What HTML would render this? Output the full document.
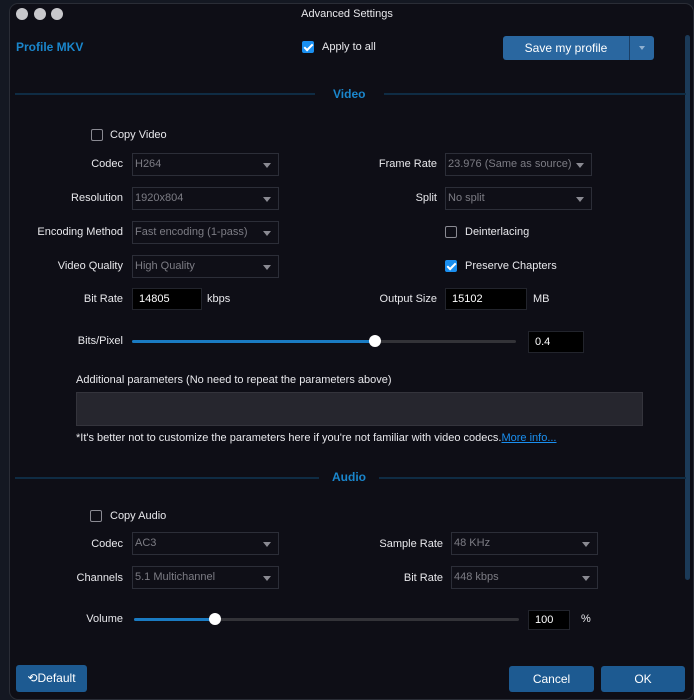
<!DOCTYPE html>
<html><head><meta charset="utf-8"><style>
*{margin:0;padding:0;box-sizing:border-box}
body{width:694px;height:700px;background:#141822;font-family:"Liberation Sans",sans-serif;font-size:11px;color:#e8e8ec;position:relative;overflow:hidden}
.win{position:absolute;left:9px;top:3px;width:685px;height:697px;background:#0e0e16;border:1px solid #2a2d36;border-radius:9px;}
.a{position:absolute;white-space:nowrap}
.lbl{position:absolute;text-align:right;white-space:nowrap}
.sel{position:absolute;height:23px;border:1px solid #2c2e38;background:#0f0f17;color:#7c7c84;padding:0 0 0 2px;line-height:21px}
.sel:after{content:"";position:absolute;right:7px;top:9px;border-left:4px solid transparent;border-right:4px solid transparent;border-top:5px solid #8a8a92}
.inp{position:absolute;background:#000;border:1px solid #22242c;color:#fff;line-height:20px;padding-left:6px}
.cb{position:absolute;width:12px;height:12px;border:1px solid #8a8a92;border-radius:2px}
.cb.on{background:#1a8ff0;border-color:#1a8ff0}
.cb.on:after{content:"";position:absolute;left:3px;top:0px;width:3px;height:7px;border:solid #fff;border-width:0 2px 2px 0;transform:rotate(45deg)}
.line{position:absolute;height:2px;background:#0f2c44}
.sec{position:absolute;color:#1a86cc;font-weight:bold;font-size:12px}
.btn{position:absolute;background:#1d5a91;border-radius:3px;color:#fff;text-align:center;font-size:12px}
.track{position:absolute;height:3px;background:#333338;border-radius:2px}
.fill{position:absolute;height:3px;background:#1a7bc2;border-radius:2px}
.thumb{position:absolute;width:12px;height:12px;border-radius:50%;background:#fff}
.dot{position:absolute;width:12px;height:12px;border-radius:50%;background:#c8c8cc;top:8px}
</style></head><body>
<div class="win"></div>
<div class="dot" style="left:16px"></div><div class="dot" style="left:34px"></div><div class="dot" style="left:51px"></div>
<div class="a" style="left:0;width:694px;text-align:center;top:8px">Advanced Settings</div>
<div style="position:absolute;left:685px;top:35px;width:5px;height:545px;background:#1b3a58;border-radius:3px"></div>

<div class="a" style="left:16px;top:40px;color:#1a86cc;font-weight:bold;font-size:12px">Profile MKV</div>
<div class="cb on" style="left:302px;top:41px"></div>
<div class="a" style="left:322px;top:41px">Apply to all</div>
<div class="btn" style="left:503px;top:36px;width:151px;height:24px;line-height:24px;background:#2a67a0"><span style="position:absolute;left:0;width:126px">Save my profile</span><span style="position:absolute;left:126px;top:0;width:1px;height:24px;background:#1a3f66"></span><span style="position:absolute;left:136px;top:10px;border-left:3px solid transparent;border-right:3px solid transparent;border-top:4px solid #8fb0d0"></span></div>

<div class="line" style="left:15px;width:300px;top:93px"></div>
<div class="line" style="left:384px;width:302px;top:93px"></div>
<div class="sec" style="left:333px;top:87px">Video</div>

<div class="cb" style="left:91px;top:129px"></div>
<div class="a" style="left:110px;top:129px">Copy Video</div>

<div class="lbl" style="right:571px;top:158px">Codec</div>
<div class="sel" style="left:132px;top:153px;width:147px">H264</div>
<div class="lbl" style="right:571px;top:192px">Resolution</div>
<div class="sel" style="left:132px;top:187px;width:147px">1920x804</div>
<div class="lbl" style="right:571px;top:226px">Encoding Method</div>
<div class="sel" style="left:132px;top:221px;width:147px">Fast encoding (1-pass)</div>
<div class="lbl" style="right:571px;top:260px">Video Quality</div>
<div class="sel" style="left:132px;top:255px;width:147px">High Quality</div>
<div class="lbl" style="right:571px;top:293px">Bit Rate</div>
<div class="inp" style="left:132px;top:288px;width:70px;height:22px">14805</div>
<div class="a" style="left:207px;top:293px">kbps</div>

<div class="lbl" style="right:257px;top:158px">Frame Rate</div>
<div class="sel" style="left:445px;top:153px;width:147px">23.976 (Same as source)</div>
<div class="lbl" style="right:257px;top:192px">Split</div>
<div class="sel" style="left:445px;top:187px;width:147px">No split</div>
<div class="cb" style="left:445px;top:226px"></div>
<div class="a" style="left:465px;top:226px">Deinterlacing</div>
<div class="cb on" style="left:445px;top:260px"></div>
<div class="a" style="left:465px;top:260px">Preserve Chapters</div>
<div class="lbl" style="right:257px;top:293px">Output Size</div>
<div class="inp" style="left:445px;top:288px;width:82px;height:22px">15102</div>
<div class="a" style="left:533px;top:293px">MB</div>

<div class="lbl" style="right:571px;top:335px">Bits/Pixel</div>
<div class="track" style="left:132px;width:384px;top:340px"></div>
<div class="fill" style="left:132px;width:243px;top:340px"></div>
<div class="thumb" style="left:369px;top:335px"></div>
<div class="inp" style="left:528px;top:331px;width:56px;height:22px">0.4</div>

<div class="a" style="left:76px;top:374px">Additional parameters (No need to repeat the parameters above)</div>
<div style="position:absolute;left:76px;top:392px;width:567px;height:34px;background:#26262e;border:1px solid #34343c"></div>
<div class="a" style="left:76px;top:432px">*It's better not to customize the parameters here if you're not familiar with video codecs.<span style="color:#1a8ff0;text-decoration:underline">More info...</span></div>

<div class="line" style="left:15px;width:304px;top:477px"></div>
<div class="line" style="left:379px;width:307px;top:477px"></div>
<div class="sec" style="left:332px;top:470px">Audio</div>

<div class="cb" style="left:90px;top:510px"></div>
<div class="a" style="left:110px;top:510px">Copy Audio</div>
<div class="lbl" style="right:571px;top:538px">Codec</div>
<div class="sel" style="left:132px;top:532px;width:147px">AC3</div>
<div class="lbl" style="right:571px;top:572px">Channels</div>
<div class="sel" style="left:132px;top:566px;width:147px">5.1 Multichannel</div>
<div class="lbl" style="right:251px;top:538px">Sample Rate</div>
<div class="sel" style="left:451px;top:532px;width:147px">48 KHz</div>
<div class="lbl" style="right:251px;top:572px">Bit Rate</div>
<div class="sel" style="left:451px;top:566px;width:147px">448 kbps</div>

<div class="lbl" style="right:571px;top:613px">Volume</div>
<div class="track" style="left:134px;width:385px;top:618px"></div>
<div class="fill" style="left:134px;width:81px;top:618px"></div>
<div class="thumb" style="left:209px;top:613px"></div>
<div class="inp" style="left:528px;top:610px;width:42px;height:20px;line-height:18px">100</div>
<div class="a" style="left:581px;top:613px">%</div>

<div class="btn" style="left:16px;top:665px;width:71px;height:27px;line-height:27px">&#x27F2;Default</div>
<div class="btn" style="left:509px;top:666px;width:85px;height:26px;line-height:26px">Cancel</div>
<div class="btn" style="left:601px;top:666px;width:84px;height:26px;line-height:26px">OK</div>
</body></html>
